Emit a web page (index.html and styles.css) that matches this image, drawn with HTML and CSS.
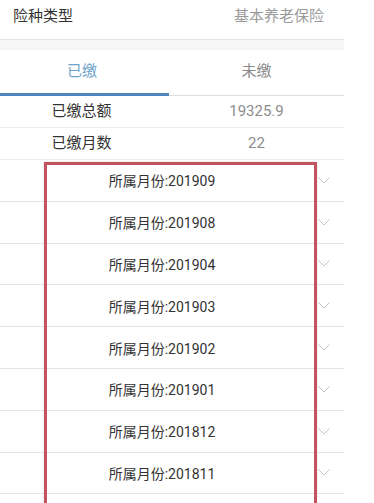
FILE: index.html
```html
<!DOCTYPE html>
<html lang="zh-CN">
<head>
<meta charset="utf-8">
<link rel="stylesheet" href="styles.css">
</head>
<body>
<div class="page">
  <div class="type-row">
    <span class="type-label">险种类型</span>
    <span class="type-value">基本养老保险</span>
  </div>
  <div class="band"></div>
  <div class="tabs">
    <div class="tab active">已缴</div>
    <div class="tab">未缴</div>
  </div>
  <div class="sum-row"><span class="sum-label">已缴总额</span><span class="sum-value">19325.9</span></div>
  <div class="sum-row"><span class="sum-label">已缴月数</span><span class="sum-value">22</span></div>
  <div class="list">
    <div class="item"><span class="item-text">所属月份:201909</span><svg class="chev" width="12" height="7" viewBox="0 0 12 7"><polyline points="0.5,0.5 6,6 11.5,0.5"/></svg></div>
    <div class="item"><span class="item-text">所属月份:201908</span><svg class="chev" width="12" height="7" viewBox="0 0 12 7"><polyline points="0.5,0.5 6,6 11.5,0.5"/></svg></div>
    <div class="item"><span class="item-text">所属月份:201904</span><svg class="chev" width="12" height="7" viewBox="0 0 12 7"><polyline points="0.5,0.5 6,6 11.5,0.5"/></svg></div>
    <div class="item"><span class="item-text">所属月份:201903</span><svg class="chev" width="12" height="7" viewBox="0 0 12 7"><polyline points="0.5,0.5 6,6 11.5,0.5"/></svg></div>
    <div class="item"><span class="item-text">所属月份:201902</span><svg class="chev" width="12" height="7" viewBox="0 0 12 7"><polyline points="0.5,0.5 6,6 11.5,0.5"/></svg></div>
    <div class="item"><span class="item-text">所属月份:201901</span><svg class="chev" width="12" height="7" viewBox="0 0 12 7"><polyline points="0.5,0.5 6,6 11.5,0.5"/></svg></div>
    <div class="item"><span class="item-text">所属月份:201812</span><svg class="chev" width="12" height="7" viewBox="0 0 12 7"><polyline points="0.5,0.5 6,6 11.5,0.5"/></svg></div>
    <div class="item"><span class="item-text">所属月份:201811</span><svg class="chev" width="12" height="7" viewBox="0 0 12 7"><polyline points="0.5,0.5 6,6 11.5,0.5"/></svg></div>
  </div>
  <div class="highlight"></div>
</div>
</body>
</html>
```
FILE: styles.css
```css
html, body {
  margin: 0;
  padding: 0;
  background: #ffffff;
  overflow: hidden;
}
body {
  font-family: Roboto, "Noto Sans CJK SC", sans-serif;
  width: 374px;
  height: 503px;
}
.page {
  position: relative;
  width: 344px;
  height: 503px;
  overflow: hidden;
}
.type-row {
  display: flex;
  justify-content: space-between;
  align-items: flex-start;
  padding: 5px 20px 0 13px;
  box-sizing: border-box;
  height: 40px;
  border-bottom: 1px solid #e2e2e2;
  font-size: 15px;
  line-height: 22px;
}
.type-label { color: #333333; }
.type-value { color: #9a9a9a; }
.band {
  height: 10px;
  background: #f6f6f6;
}
.tabs {
  display: grid;
  grid-template-columns: 169px 175px;
  height: 46px;
  box-sizing: border-box;
  border-bottom: 1px solid #dddddd;
}
.tab {
  font-size: 15px;
  color: #8a8a8a;
  text-align: center;
  line-height: 42px;
}
.tab.active {
  color: #6ea3cc;
  border-bottom: 3px solid #4f86bb;
  margin-bottom: -1px;
  padding-right: 5px;
}
.sum-row {
  display: grid;
  grid-template-columns: 169px 175px;
  height: 32px;
  box-sizing: border-box;
  border-bottom: 1px solid #ececec;
  font-size: 15px;
  line-height: 31px;
  text-align: center;
}
.sum-label { color: #333333; padding-right: 6px; }
.sum-value { color: #8c8c8c; }
.item {
  display: flex;
  align-items: center;
  height: 41.8px;
  box-sizing: border-box;
  border-bottom: 1px solid #e4e4e4;
}
.item-text {
  width: 324px;
  text-align: center;
  font-size: 14px;
  color: #333333;
}
.chev {
  fill: none;
  stroke: #c4c4c4;
  stroke-width: 1;
  margin-left: -6px;
}
.highlight {
  position: absolute;
  left: 44px;
  top: 162px;
  width: 273px;
  height: 400px;
  box-sizing: border-box;
  border: 3px solid #c1545e;
  box-shadow: 0 0 1px rgba(193, 84, 94, 0.5);
}
```
